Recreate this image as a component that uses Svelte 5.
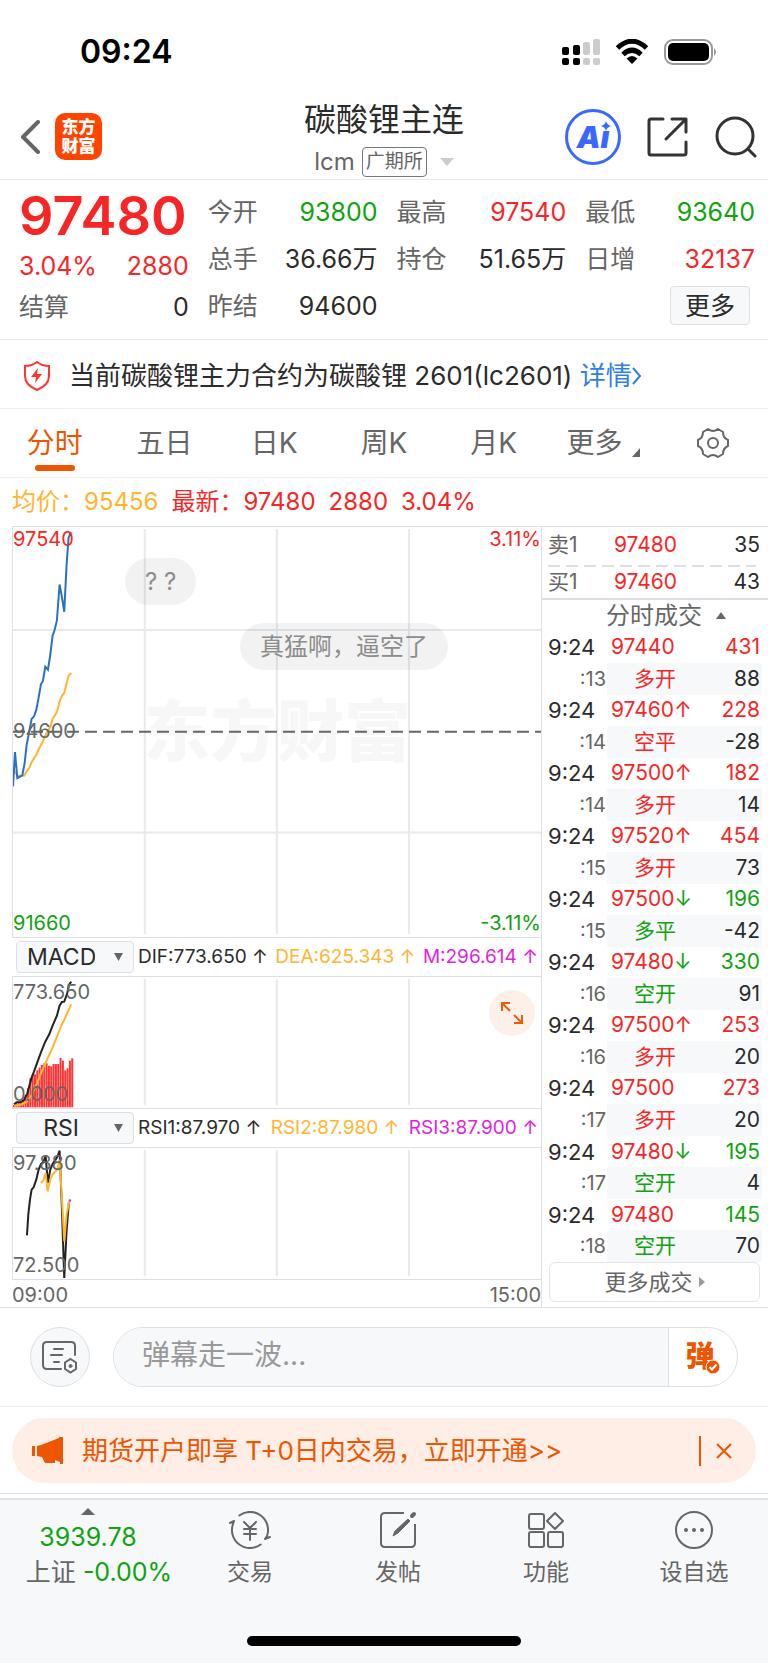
<script>
  const stats = [
    { label: '今开', value: '93800', tone: 'down' },
    { label: '最高', value: '97540', tone: 'up' },
    { label: '最低', value: '93640', tone: 'down' },
    { label: '总手', value: '36.66万' },
    { label: '持仓', value: '51.65万' },
    { label: '日增', value: '32137', tone: 'up' },
    { label: '昨结', value: '94600' },
  ];

  const periods = ['分时', '五日', '日K', '周K', '月K'];
  let period = $state('分时');

  const book = [
    { side: '卖1', price: '97480', volume: 35 },
    { side: '买1', price: '97460', volume: 43 },
  ];

  const trades = [
    { sec: ':13', price: '97440', arrow: '', volume: 431, action: '多开', change: 88, tone: 'up' },
    { sec: ':14', price: '97460', arrow: '↑', volume: 228, action: '空平', change: -28, tone: 'up' },
    { sec: ':14', price: '97500', arrow: '↑', volume: 182, action: '多开', change: 14, tone: 'up' },
    { sec: ':15', price: '97520', arrow: '↑', volume: 454, action: '多开', change: 73, tone: 'up' },
    { sec: ':15', price: '97500', arrow: '↓', volume: 196, action: '多平', change: -42, tone: 'down' },
    { sec: ':16', price: '97480', arrow: '↓', volume: 330, action: '空开', change: 91, tone: 'down' },
    { sec: ':16', price: '97500', arrow: '↑', volume: 253, action: '多开', change: 20, tone: 'up' },
    { sec: ':17', price: '97500', arrow: '', volume: 273, action: '多开', change: 20, tone: 'up' },
    { sec: ':17', price: '97480', arrow: '↓', volume: 195, action: '空开', change: 4, tone: 'down' },
    { sec: ':18', price: '97480', arrow: '', volume: 145, action: '空开', change: 70, tone: 'down' },
  ];

  // series are in chart units, three to a pixel at the default width
  const priceLine = '0,780 6,677 13,755 28,747 35,710 41,655 49,615 56,577 63,570 70,550 77,513 84,473 90,463 97,420 105,429 112,385 119,327 125,310 132,281 140,173 147,210 154,255 161,115 167,33 174,15';
  const averageLine = '2,730 13,748 33,748 41,735 49,725 56,707 70,685 77,670 84,655 90,645 97,627 112,601 119,577 132,557 140,525 147,508 154,499 167,448 175,439';
  const difLine = '3,382 11,376 23,375 33,369 43,349 56,302 63,284 84,226 97,194 109,172 119,146 132,116 140,86 147,75 154,74 163,49 168,24 175,14';
  const deaLine = '3,386 23,383 41,375 56,354 70,324 84,289 97,259 119,212 140,159 147,142 154,129 167,99 175,82';
  const macdBars = [7, 12, 14, 16, 22, 37, 57, 87, 97, 99, 111, 119, 127, 132, 132, 125, 123, 130, 130, 130, 148, 140, 111, 117, 140, 147];
  const rsi1Line = '42,262 46,200 51,155 56,125 62,118 70,95 77,65 84,48 91,42 98,25 105,105 112,65 119,48 128,35 134,25 140,8 147,180 154,390 161,250 168,162';
  const rsi2Line = '84,105 91,98 98,75 104,130 112,95 119,80 133,65 140,35 147,150 154,280 161,200 169,160';

  let upper = $state('MACD');
  let lower = $state('RSI');
  let message = $state('');
  let showBanner = $state(true);
</script>

{#snippet columns(height)}
  {#each [396, 793, 1190] as x}
    <line class="grid" x1={x} y1="6" x2={x} y2={height - 8} />
  {/each}
{/snippet}

<div class="page">
  <div class="status">
    <span class="clock">09:24</span>
    <div class="status-icons">
      <svg width="38" height="28" viewBox="0 0 38 28">
        <g fill="#000">
          <rect x="0" y="9" width="7" height="8" rx="2" /><rect x="11" y="7" width="7" height="10" rx="2" />
          <rect x="0" y="20" width="7" height="7" rx="2" /><rect x="11" y="20" width="7" height="7" rx="2" />
        </g>
        <g fill="#ccc">
          <rect x="21" y="4" width="7" height="13" rx="2" /><rect x="31" y="1" width="7" height="16" rx="2" />
          <rect x="21" y="20" width="7" height="7" rx="2" /><rect x="31" y="20" width="7" height="7" rx="2" />
        </g>
      </svg>
      <svg width="34" height="26" viewBox="0 0 34 26" fill="none" stroke="#000" stroke-width="5">
        <path d="M2.5 9 Q17 -4.500 31.500 9" />
        <path d="M8 15.500 Q17 7 26 15.500" />
        <path d="M11.500 19.500 Q17 14.500 22.500 19.500 L17 25 Z" fill="#000" stroke="none" />
      </svg>
      <svg width="54" height="26" viewBox="0 0 54 26">
        <rect x="1" y="1" width="47" height="24" rx="8" fill="none" stroke="#999" stroke-width="2" />
        <rect x="4" y="4" width="41" height="18" rx="5" fill="#000" />
        <path d="M50 9 Q54 13 50 17 Z" fill="#999" />
      </svg>
    </div>
  </div>

  <header>
    <div class="side">
      <button class="plain" aria-label="返回">
        <svg width="20" height="34" viewBox="0 0 20 34" fill="none" stroke="#666" stroke-width="4" stroke-linecap="round" stroke-linejoin="round">
          <path d="M18 2 L3 17 L18 32" />
        </svg>
      </button>
      <a class="logo" href="#home"><span>东方</span><span>财富</span></a>
    </div>
    <div class="title">
      <h1>碳酸锂主连</h1>
      <button class="plain contract">
        lcm <span class="exchange">广期所</span>
        <svg width="14" height="8" viewBox="0 0 14 8"><path d="M0 0 H14 L7 8 Z" fill="#ccc" /></svg>
      </button>
    </div>
    <div class="side tools">
      <button class="plain ai" aria-label="智能助手">
        <span>Ai</span>
        <svg width="12" height="10" viewBox="0 0 12 10"><path d="M6 0 Q7 4 11 5 Q7 6 6 10 Q5 6 1 5 Q5 4 6 0 Z" fill="#3868ff" /></svg>
      </button>
      <button class="plain" aria-label="分享">
        <svg width="42" height="42" viewBox="0 0 42 42" fill="none" stroke="#333" stroke-width="3" stroke-linecap="round" stroke-linejoin="round">
          <path d="M16 3 H4 Q2 3 2 5 V37 Q2 39 4 39 H37 Q39 39 39 37 V26" />
          <path d="M25 3 H39 V16 M39 3 L19 23" />
        </svg>
      </button>
      <button class="plain" aria-label="搜索">
        <svg width="42" height="42" viewBox="0 0 42 42" fill="none" stroke="#333" stroke-width="3" stroke-linecap="round">
          <circle cx="20" cy="20" r="18" /><path d="M33 33 L40 40" />
        </svg>
      </button>
    </div>
  </header>

  <section class="quote">
    <div class="last">
      <strong class="up">97480</strong>
      <div class="pair up"><span>3.04%</span><span>2880</span></div>
      <div class="pair"><span class="label">结算</span><span>0</span></div>
    </div>
    <div class="stats">
      {#each stats as stat}
        <div class="pair">
          <span class="label">{stat.label}</span>
          <span class={stat.tone}>{stat.value}</span>
        </div>
      {/each}
      <button class="more">更多</button>
    </div>
  </section>

  <section class="notice">
    <svg width="26" height="30" viewBox="0 0 26 30">
      <path d="M13 1 Q18 5 25 5 V15 Q25 24 13 29 Q1 24 1 15 V5 Q8 5 13 1 Z" fill="none" stroke="#f33" stroke-width="2" />
      <path d="M14 7 L7 16 H12 L11 22 L18 13 H13 Z" fill="#f33" />
    </svg>
    <span>当前碳酸锂主力合约为碳酸锂 2601(lc2601) <a href="#detail">详情<svg width="10" height="18" viewBox="0 0 10 18"><path d="M1 1 L8 9 L1 17" fill="none" stroke="#2f7fe6" stroke-width="2" /></svg></a></span>
  </section>

  <nav class="periods">
    {#each periods as name}
      <button class="plain" class:active={period === name} onclick={() => (period = name)}>{name}</button>
    {/each}
    <button class="plain">更多<svg class="corner" width="8" height="9" viewBox="0 0 8 9"><path d="M8 0 V9 H0 Z" fill="#666" /></svg></button>
    <button class="plain" aria-label="设置">
      <svg width="34" height="32" viewBox="0 0 34 32" fill="none" stroke="#666" stroke-width="2" stroke-linejoin="round">
        <path d="M12 2 Q17 6 22 2 L27 5 Q27 11 32 13 V19 Q27 21 27 27 L22 30 Q17 26 12 30 L7 27 Q7 21 2 19 V13 Q7 11 7 5 Z" />
        <circle cx="17" cy="16" r="5" />
      </svg>
    </button>
  </nav>

  <div class="legend">
    <span class="avg">均价：95456</span>
    <span class="up">最新：97480</span>
    <span class="up">2880</span>
    <span class="up">3.04%</span>
  </div>

  <main>
    <div class="charts">
      <div class="chart price">
        <div class="watermark">东方财富</div>
        <svg class="plot" viewBox="0 0 1587 1233" preserveAspectRatio="none">
          {@render columns(1233)}
          <line class="grid" x1="0" y1="310" x2="1587" y2="310" />
          <line class="grid" x1="0" y1="919" x2="1587" y2="919" />
          <line class="zero" x1="0" y1="616" x2="1587" y2="616" />
          <polyline points={averageLine} stroke="#ffb52e" />
          <polyline points={priceLine} stroke="#2a71c4" />
        </svg>
        <div class="scale">
          <div class="pair"><span class="up">97540</span><span class="up">3.11%</span></div>
          <span>94600</span>
          <div class="pair"><span class="down">91660</span><span class="down">-3.11%</span></div>
        </div>
        <span class="bubble first">? ?</span>
        <span class="bubble second">真猛啊，逼空了</span>
      </div>

      <div class="indicator">
        <label>
          <select bind:value={upper} aria-label="副图一">
            <option>MACD</option>
            <option>RSI</option>
          </select>
          <svg width="9" height="8" viewBox="0 0 9 8"><path d="M0 0 H9 L4.500 8 Z" fill="#666" /></svg>
        </label>
        <div class="values"><span>DIF:773.650 ↑</span><span class="avg">DEA:625.343 ↑</span><span class="third">M:296.614 ↑</span></div>
      </div>
      <div class="chart sub">
        <svg class="plot" viewBox="0 0 1587 393" preserveAspectRatio="none">
          {@render columns(393)}
          {#each macdBars as bar, i}
            <rect x={i * 7} y={391 - bar} width="6" height={bar} fill="#f33" />
          {/each}
          <polyline points={difLine} stroke="#222" />
          <polyline points={deaLine} stroke="#ffb52e" />
        </svg>
        <div class="scale"><span>773.650</span><span>0.000</span></div>
        <button class="plain expand" aria-label="展开">
          <svg width="24" height="24" viewBox="0 0 24 24" fill="none" stroke="#f05a0a" stroke-width="2">
            <path d="M2 10 V2 H10 M2 2 L10 10 M14 14 L22 22 M14 22 H22 V14" />
          </svg>
        </button>
      </div>

      <div class="indicator">
        <label>
          <select bind:value={lower} aria-label="副图二">
            <option>MACD</option>
            <option>RSI</option>
          </select>
          <svg width="9" height="8" viewBox="0 0 9 8"><path d="M0 0 H9 L4.500 8 Z" fill="#666" /></svg>
        </label>
        <div class="values"><span>RSI1:87.970 ↑</span><span class="avg">RSI2:87.980 ↑</span><span class="third">RSI3:87.900 ↑</span></div>
      </div>
      <div class="chart sub">
        <svg class="plot" viewBox="0 0 1587 393" preserveAspectRatio="none">
          {@render columns(393)}
          <polyline points={rsi1Line} stroke="#222" />
          <polyline points={rsi2Line} stroke="#ffb52e" />
          <circle cx="171" cy="158" r="4" fill="#d63bd6" />
        </svg>
        <div class="scale"><span>97.880</span><span>72.500</span></div>
      </div>
      <div class="pair times"><span>09:00</span><span>15:00</span></div>
    </div>

    <aside>
      <table class="book">
        <tbody>
          {#each book as row}
            <tr><th>{row.side}</th><td class="up">{row.price}</td><td>{row.volume}</td></tr>
          {/each}
        </tbody>
      </table>
      <button class="plain tape-title">
        分时成交
        <svg width="10" height="7" viewBox="0 0 10 7"><path d="M5 0 L10 7 H0 Z" fill="#666" /></svg>
      </button>
      <table class="tape">
        <tbody>
          {#each trades as trade}
            <tr>
              <th>9:24</th>
              <td class="up">{trade.price}<span class={trade.tone}>{trade.arrow}</span></td>
              <td class={trade.tone}>{trade.volume}</td>
            </tr>
            <tr class="detail">
              <th>{trade.sec}</th>
              <td class={trade.tone}>{trade.action}</td>
              <td>{trade.change}</td>
            </tr>
          {/each}
        </tbody>
      </table>
      <button class="all-trades">
        更多成交
        <svg width="6" height="10" viewBox="0 0 6 10"><path d="M0 0 L6 5 L0 10 Z" fill="#999" /></svg>
      </button>
    </aside>
  </main>

  <form class="danmu" onsubmit={(e) => e.preventDefault()}>
    <button class="round" type="button" aria-label="弹幕设置">
      <svg width="36" height="34" viewBox="0 0 36 34" fill="none" stroke="#666" stroke-width="2" stroke-linecap="round">
        <path d="M19 29 H5 Q1 29 1 25 V6 Q1 2 5 2 H29 Q33 2 33 6 V15" />
        <path d="M12 9 H21 M9 15 H20 M12 22 H17" />
        <path d="M28.500 19 L34 22.500 V29 L28.500 32.500 L23 29 V22.500 Z" />
        <circle cx="28.500" cy="26" r="1.500" fill="#666" stroke-width="1" />
      </svg>
    </button>
    <div class="pill">
      <input type="text" bind:value={message} placeholder="弹幕走一波..." aria-label="弹幕" />
      <button class="plain send" aria-label="弹幕开关">
        弹
        <svg width="16" height="16" viewBox="0 0 16 16">
          <circle cx="8" cy="8" r="7" fill="#ed5500" stroke="#fff" stroke-width="1" />
          <path d="M4.500 8 L7 10.500 L11.500 5.500" fill="none" stroke="#fff" stroke-width="2" />
        </svg>
      </button>
    </div>
  </form>

  <div class="promo">
    {#if showBanner}
      <div class="banner">
        <svg width="31" height="28" viewBox="0 0 31 28" fill="#ed5500">
          <path d="M0 9 H3 V19 H0 Z M5 9 L9 8 L27 1 V0 H31 V27 H28 V25 L23 23 V26 H13 L10 20 L5 19 Z" />
        </svg>
        <a href="#open">期货开户即享 T+0日内交易，立即开通&gt;&gt;</a>
        <button class="plain" aria-label="关闭" onclick={() => (showBanner = false)}>
          <svg width="16" height="16" viewBox="0 0 16 16"><path d="M1 1 L15 15 M15 1 L1 15" stroke="#ed5500" stroke-width="2" /></svg>
        </button>
      </div>
    {/if}
  </div>

  <footer>
    <a class="index" href="#index">
      <svg width="14" height="7" viewBox="0 0 14 7"><path d="M7 0 L14 7 H0 Z" fill="#666" /></svg>
      <span class="down">3939.78</span>
      <span class="change">上证 <span class="down">-0.00%</span></span>
    </a>
    <a href="#trade">
      <svg width="42" height="38" viewBox="0 0 42 38" fill="none" stroke="#666" stroke-width="2" stroke-linecap="round" stroke-linejoin="round">
        <path d="M10.300 4.500 A18 18 0 0 1 38 25 L36 28 L41 26" />
        <path d="M31.700 33.500 A18 18 0 0 1 4 13 L5 10 L1 12" />
        <path d="M15 11 L21 17 L27 11 M15 18 H27 M15 23 H27 M21 17 V29" />
      </svg>
      交易
    </a>
    <a href="#post">
      <svg width="38" height="38" viewBox="0 0 38 38" fill="none" stroke="#666" stroke-width="2">
        <path d="M25 2 H6 Q2 2 2 6 V32 Q2 36 6 36 H32 Q36 36 36 32 V13" />
        <path d="M14 25 L16 20 L29 8 L31 10 L19 22 Z" fill="#666" stroke-width="1" />
        <path d="M33 5 L35 3" stroke-width="4" stroke-linecap="round" />
      </svg>
      发帖
    </a>
    <a href="#tools">
      <svg width="36" height="38" viewBox="0 0 36 38" fill="none" stroke="#666" stroke-width="2" stroke-linejoin="round">
        <rect x="1" y="3" width="15" height="15" rx="2" /><rect x="1" y="21" width="15" height="15" rx="2" />
        <rect x="20" y="21" width="15" height="15" rx="2" /><path d="M27 2 L35 10 L27 18 L19 10 Z" />
      </svg>
      功能
    </a>
    <a href="#watch">
      <svg width="38" height="38" viewBox="0 0 38 38">
        <circle cx="19" cy="19" r="18" fill="none" stroke="#666" stroke-width="2" />
        <g fill="#666"><circle cx="11" cy="19" r="2" /><circle cx="19" cy="19" r="2" /><circle cx="27" cy="19" r="2" /></g>
      </svg>
      设自选
    </a>
  </footer>
  <div class="home"><span></span></div>
</div>

<style>
  :global(body) {
    margin: 0;
    background: #fff;
  }

  .page {
    font-family: Inter, 'Noto Sans CJK SC', sans-serif;
    font-size: 25px;
    line-height: 32px;
    color: #2b2b2b;
  }

  .page * {
    box-sizing: border-box;
  }

  button, input, select {
    font: inherit;
    color: inherit;
  }

  svg {
    display: block;
    flex: none;
  }

  a {
    color: inherit;
    text-decoration: none;
  }

  .plain {
    padding: 0;
    border: none;
    background: none;
    cursor: pointer;
  }

  .up { color: #f72626; }
  .down { color: #0fa30f; }
  .avg { color: #ffb52e; }
  .third { color: #e01fe0; }
  .label { color: #666; }

  .pair {
    display: flex;
    justify-content: space-between;
  }

  .status {
    display: flex;
    justify-content: space-between;
    align-items: center;
    height: 96px;
    padding: 8px 50px 0 80px;
  }

  .clock {
    font-size: 32px;
    font-weight: 600;
    color: #000;
  }

  .status-icons {
    display: flex;
    align-items: center;
    gap: 15px;
  }

  header {
    display: grid;
    grid-template-columns: 1fr auto 1fr;
    align-items: center;
    height: 84px;
    padding: 0 11px 6px;
    border-bottom: 1px solid #e8e8e8;
  }

  .side {
    display: flex;
    align-items: center;
    gap: 15px;
    padding-left: 9px;
  }

  .tools {
    justify-content: flex-end;
    gap: 26px;
    padding: 0;
  }

  .logo {
    display: flex;
    flex-direction: column;
    align-items: center;
    justify-content: center;
    width: 47px;
    height: 47px;
    border-radius: 10px;
    background: #ff4400;
    color: #fff;
    font-size: 17px;
    line-height: 19px;
    font-weight: 900;
  }

  .title {
    display: flex;
    flex-direction: column;
    align-items: center;
    gap: 7px;
    padding-top: 4px;
  }

  h1 {
    margin: 0;
    font-size: 32px;
    line-height: 40px;
    font-weight: 400;
  }

  .contract {
    display: flex;
    align-items: center;
    gap: 7px;
    line-height: 30px;
    font-size: 24px;
    color: #666;
  }

  .exchange {
    padding: 0 3px;
    border: 1px solid #777;
    border-radius: 4px;
    font-size: 19px;
    line-height: 28px;
  }

  .contract svg {
    margin-left: 6px;
  }

  .ai {
    display: flex;
    justify-content: center;
    align-items: center;
    position: relative;
    width: 56px;
    height: 56px;
    border: 3px solid #3868ff;
    border-radius: 50%;
    color: #3868ff;
    font-size: 30px;
    font-weight: 900;
    font-style: italic;
  }

  .ai svg {
    position: absolute;
    top: 9px;
    right: 6px;
    background: #fff;
  }

  .quote {
    display: grid;
    grid-template-columns: calc((100% - 57px) / 4) 1fr;
    gap: 19px;
    height: 160px;
    padding: 0 13px 0 19px;
    border-bottom: 1px solid #e8e8e8;
  }

  .last {
    padding-top: 12px;
  }

  .last strong {
    display: block;
    font-size: 54px;
    line-height: 48px;
    font-weight: 600;
    height: 58px;
  }

  .last .pair {
    height: 41px;
  }

  .stats {
    display: grid;
    grid-template-columns: repeat(3, 1fr);
    grid-auto-rows: 47px;
    column-gap: 19px;
    padding-top: 16px;
  }

  .more {
    grid-column: 3;
    justify-self: end;
    width: 80px;
    height: 39px;
    margin: -4px 5px 0 0;
    padding: 0;
    border: 1px solid #dcdfe5;
    border-radius: 4px;
    background: #f6f8fa;
  }

  .notice {
    display: flex;
    align-items: center;
    gap: 19px;
    height: 69px;
    padding: 4px 24px 0;
    border-bottom: 1px solid #f0f0f0;
    font-size: 26px;
  }

  .notice a {
    display: inline-flex;
    align-items: center;
    color: #2f7fe6;
  }

  .periods {
    display: grid;
    grid-template-columns: repeat(7, 1fr);
    height: 69px;
    border-bottom: 1px solid #f0f0f0;
    font-size: 28px;
    color: #666;
  }

  .periods button {
    display: flex;
    align-items: center;
    justify-content: center;
    position: relative;
  }

  .periods .active {
    color: #ed5500;
  }

  .periods .active::after {
    content: '';
    position: absolute;
    bottom: 6px;
    width: 40px;
    height: 6px;
    border-radius: 3px;
    background: #ed5500;
  }

  .corner {
    align-self: flex-end;
    margin: 0 0 20px 10px;
  }

  .legend {
    display: flex;
    gap: 13px;
    height: 48px;
    padding: 8px 12px;
    font-size: 24px;
  }

  main {
    display: flex;
    border-bottom: 1px solid #dcdfe5;
  }

  .charts {
    flex: 1;
    min-width: 0;
    padding-left: 12px;
    border-right: 1px solid #dcdfe5;
    font-size: 20px;
    line-height: 24px;
    color: #666;
  }

  .chart {
    position: relative;
    border-left: 1px solid #dcdfe5;
    border-bottom: 1px solid #dcdfe5;
  }

  .price {
    height: 412px;
    border-top: 1px solid #dcdfe5;
  }

  .sub {
    height: 132px;
  }

  .plot {
    position: absolute;
    inset: 0;
    width: 100%;
    height: 100%;
  }

  .plot line, .plot polyline {
    fill: none;
    stroke-width: 2;
    vector-effect: non-scaling-stroke;
  }

  .plot .grid {
    stroke: #e6e9f0;
  }

  .plot .zero {
    stroke: #666;
    stroke-dasharray: 12 6;
  }

  .scale {
    display: flex;
    flex-direction: column;
    justify-content: space-between;
    position: relative;
    height: 100%;
    padding-bottom: 2px;
  }

  .sub .scale {
    padding: 3px 0 2px;
  }

  .watermark {
    position: absolute;
    inset: 0;
    display: flex;
    align-items: center;
    justify-content: center;
    font-size: 67px;
    font-weight: 900;
    color: #f7f7f7;
  }

  .bubble {
    position: absolute;
    padding: 0 20px;
    border-radius: 24px;
    background: rgba(0, 0, 0, 0.05);
    font-size: 24px;
    line-height: 47px;
    color: #8c8c8c;
    white-space: nowrap;
  }

  .first {
    top: 31px;
    left: 112px;
  }

  .second {
    top: 96px;
    left: 227px;
  }

  .indicator {
    display: flex;
    align-items: center;
    gap: 4px;
    height: 39px;
    padding-left: 4px;
    border-bottom: 1px solid #dcdfe5;
  }

  .indicator label {
    display: flex;
    align-items: center;
    position: relative;
    width: 118px;
    height: 32px;
  }

  .indicator select {
    appearance: none;
    width: 100%;
    height: 100%;
    padding: 0 38px 0 10px;
    border: 1px solid #dcdfe5;
    border-radius: 4px;
    background: #f6f8fa;
    color: #2b2b2b;
    font-size: 23px;
    line-height: 30px;
    text-align: center;
  }

  .indicator label svg {
    position: absolute;
    right: 11px;
  }

  .values {
    display: flex;
    flex: 1;
    justify-content: space-between;
    padding-right: 3px;
    color: #2b2b2b;
    font-size: 19px;
    white-space: nowrap;
  }

  .values .avg { color: #ffb52e; }
  .values .third { color: #e01fe0; }

  .expand {
    display: flex;
    align-items: center;
    justify-content: center;
    position: absolute;
    top: 13px;
    right: 6px;
    width: 46px;
    height: 46px;
    border-radius: 50%;
    background: #fdf0e9;
  }

  .times {
    height: 27px;
    padding-top: 3px;
  }

  aside {
    display: flex;
    flex-direction: column;
    width: 226px;
    font-size: 21px;
  }

  table {
    border-collapse: collapse;
    table-layout: fixed;
    width: 100%;
  }

  th, td {
    padding: 0;
    font-weight: 400;
    text-align: left;
  }

  td:last-child {
    text-align: right;
    padding-right: 8px;
  }

  .book {
    border-top: 1px solid #dcdfe5;
    border-bottom: 2px solid #dcdfe5;
  }

  .book tr {
    height: 36px;
    line-height: 30px;
  }

  .book tr + tr {
    background: repeating-linear-gradient(90deg, #dcdfe5 0 12px, transparent 12px 18px) 6px 2px / 208px 2px no-repeat;
  }

  .book tr + tr > * {
    padding-top: 4px;
  }

  .book th {
    width: 72px;
    padding-left: 6px;
    color: #666;
  }

  .tape-title {
    display: flex;
    align-items: center;
    gap: 14px;
    height: 32px;
    padding-left: 64px;
    font-size: 24px;
    color: #666;
  }

  .tape {
    flex: 1;
  }

  .tape tr {
    height: 31px;
    line-height: 30px;
  }

  .tape th {
    width: 65px;
    padding-left: 6px;
    font-size: 22px;
  }

  .tape td:nth-child(2) {
    width: 90px;
    padding-left: 4px;
  }

  .tape .detail {
    background: linear-gradient(#f6f8fa, #f6f8fa) 65px 0 / 155px 100% no-repeat;
  }

  .tape .detail th {
    padding-right: 1px;
    font-size: 20px;
    text-align: right;
    color: #666;
  }

  .tape .detail td:nth-child(2) {
    padding-left: 6px;
    text-align: center;
  }

  .all-trades {
    display: flex;
    align-items: center;
    justify-content: center;
    gap: 6px;
    height: 40px;
    margin: 0 8px 5px 7px;
    border: 1px solid #e2e4e8;
    border-radius: 6px;
    background: #fff;
    font-size: 22px;
    color: #666;
  }

  .danmu {
    display: flex;
    gap: 23px;
    height: 99px;
    padding: 19px 30px 0;
    border-bottom: 1px solid #f0f0f0;
  }

  .round {
    display: flex;
    align-items: center;
    justify-content: center;
    width: 60px;
    height: 60px;
    padding: 0;
    border: 1px solid #dcdfe5;
    border-radius: 50%;
    background: #f6f8fa;
  }

  .pill {
    display: flex;
    flex: 1;
    height: 60px;
    border: 1px solid #dcdfe5;
    border-radius: 30px;
    overflow: hidden;
  }

  .pill input {
    flex: 1;
    min-width: 0;
    padding: 0 28px 4px;
    border: none;
    border-right: 1px solid #dcdfe5;
    background: #f6f8fa;
    font-size: 28px;
  }

  .pill input::placeholder {
    color: #999;
  }

  .send {
    position: relative;
    width: 68px;
    padding-right: 6px;
    font-size: 29px;
    font-weight: 900;
    color: #ed5500;
  }

  .send svg {
    position: absolute;
    right: 16px;
    bottom: 11px;
  }

  .promo {
    padding: 11px 12px 10px;
    border-bottom: 1px solid #dcdfe5;
  }

  .banner {
    display: flex;
    align-items: center;
    gap: 19px;
    height: 65px;
    padding: 0 24px 0 20px;
    border-radius: 33px;
    background: #feeee6;
    font-size: 26px;
    color: #ed5500;
  }

  .banner a {
    flex: 1;
  }

  .banner button {
    padding: 7px 0 7px 15px;
    border-left: 2px solid #ed5500;
  }

  footer {
    display: grid;
    grid-template-columns: 176px repeat(4, 1fr);
    height: 125px;
    margin-top: 4px;
    padding-top: 8px;
    border-top: 2px solid #dfe2e6;
    background: #f6f8fa;
    font-size: 23px;
    color: #666;
  }

  footer a {
    display: flex;
    flex-direction: column;
    align-items: center;
    gap: 7px;
    padding-top: 3px;
  }

  footer .index {
    gap: 3px;
    padding: 0;
    font-size: 25px;
  }

  .index svg {
    margin-bottom: 3px;
  }

  .change {
    padding-left: 22px;
    white-space: nowrap;
  }

  .home {
    display: flex;
    justify-content: center;
    height: 40px;
    padding-top: 13px;
    background: #f6f8fa;
  }

  .home span {
    width: 274px;
    height: 10px;
    border-radius: 5px;
    background: #000;
  }
</style>
